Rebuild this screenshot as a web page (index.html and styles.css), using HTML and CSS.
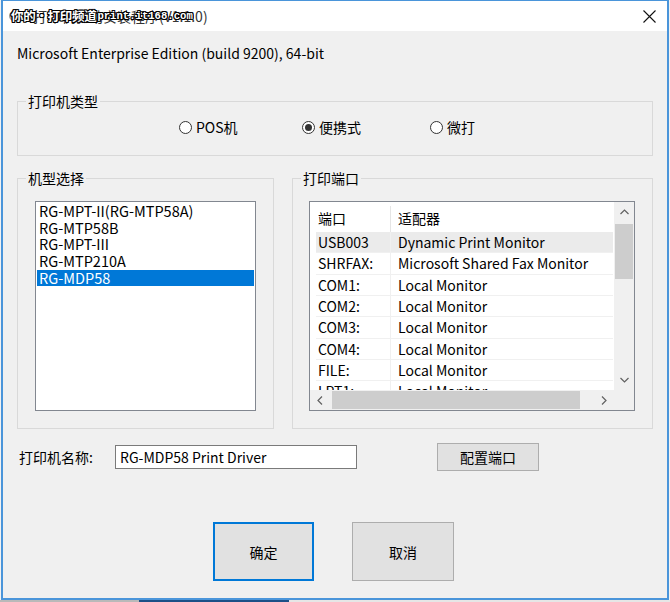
FILE: index.html
```html
<!DOCTYPE html>
<html lang="zh-CN">
<head>
<meta charset="utf-8">
<title>打印机驱动安装程序</title>
<link rel="stylesheet" href="styles.css">
</head>
<body>
<div class="window">
  <div class="titlebar">
    <span class="app-icon"></span>
    <span class="title">打印机驱动安装程序(V1.1.0)</span>
    <span class="watermark"><span class="wm-cn">你的·打印频道</span><span class="wm-en">print.it168.com</span></span>
    <span class="close">
      <svg width="13" height="13" viewBox="0 0 13 13"><path d="M0.5 0.5 L12.5 12.5 M12.5 0.5 L0.5 12.5" stroke="#111" stroke-width="1.1" fill="none"/></svg>
    </span>
  </div>
  <div class="content">
    <div class="info">Microsoft Enterprise Edition (build 9200), 64-bit</div>

    <fieldset class="group type-group">
      <legend>打印机类型</legend>
      <div class="radios">
        <label class="radio"><span class="circle"></span>POS机</label>
        <label class="radio checked"><span class="circle"></span>便携式</label>
        <label class="radio"><span class="circle"></span>微打</label>
      </div>
    </fieldset>

    <div class="groups">
      <fieldset class="group model-group">
        <legend>机型选择</legend>
        <ul class="listbox">
          <li>RG-MPT-II(RG-MTP58A)</li>
          <li>RG-MTP58B</li>
          <li>RG-MPT-III</li>
          <li>RG-MTP210A</li>
          <li class="selected">RG-MDP58</li>
        </ul>
      </fieldset>

      <fieldset class="group port-group">
        <legend>打印端口</legend>
        <div class="listview">
          <div class="lv-body">
            <div class="lv-table">
              <div class="lv-head"><span class="c1">端口</span><span class="c2">适配器</span></div>
              <div class="lv-row hot"><span class="c1">USB003</span><span class="c2">Dynamic Print Monitor</span></div>
              <div class="lv-row"><span class="c1">SHRFAX:</span><span class="c2">Microsoft Shared Fax Monitor</span></div>
              <div class="lv-row"><span class="c1">COM1:</span><span class="c2">Local Monitor</span></div>
              <div class="lv-row"><span class="c1">COM2:</span><span class="c2">Local Monitor</span></div>
              <div class="lv-row"><span class="c1">COM3:</span><span class="c2">Local Monitor</span></div>
              <div class="lv-row"><span class="c1">COM4:</span><span class="c2">Local Monitor</span></div>
              <div class="lv-row"><span class="c1">FILE:</span><span class="c2">Local Monitor</span></div>
              <div class="lv-row"><span class="c1">LPT1:</span><span class="c2">Local Monitor</span></div>
            </div>
          </div>
          <div class="vscroll">
            <span class="arrow"><svg width="9" height="6" viewBox="0 0 9 6"><path d="M0.5 5 L4.5 1 L8.5 5" stroke="#606060" stroke-width="1.2" fill="none"/></svg></span>
            <span class="track"><span class="thumb"></span></span>
            <span class="arrow"><svg width="9" height="6" viewBox="0 0 9 6"><path d="M0.5 1 L4.5 5 L8.5 1" stroke="#606060" stroke-width="1.2" fill="none"/></svg></span>
          </div>
          <div class="hscroll">
            <span class="arrow"><svg width="6" height="9" viewBox="0 0 6 9"><path d="M5 0.5 L1 4.5 L5 8.5" stroke="#606060" stroke-width="1.2" fill="none"/></svg></span>
            <span class="track"><span class="thumb"></span></span>
            <span class="arrow"><svg width="6" height="9" viewBox="0 0 6 9"><path d="M1 0.5 L5 4.5 L1 8.5" stroke="#606060" stroke-width="1.2" fill="none"/></svg></span>
          </div>
          <div class="corner"></div>
        </div>
      </fieldset>
    </div>

    <div class="name-row">
      <span class="name-label">打印机名称:</span>
      <span class="textbox">RG-MDP58 Print Driver</span>
      <button class="btn config-btn">配置端口</button>
    </div>

    <div class="actions">
      <button class="btn big default">确定</button>
      <button class="btn big">取消</button>
    </div>
  </div>
</div>
<div class="taskbar">
  <span class="tb-text"></span>
  <span class="tb-active"></span>
  <span class="tb-rest"></span>
</div>
</body>
</html>
```

FILE: styles.css
```css
* { box-sizing: border-box; }

html, body {
  margin: 0;
  padding: 0;
}

body {
  width: 670px;
  height: 602px;
  overflow: hidden;
  background: #f2f2f2;
  font-family: "Noto Sans CJK SC", "Noto Sans", sans-serif;
  font-size: 14px;
  color: #000;
}

.window {
  margin-left: 1px;
  width: 668px;
  height: 600px;
  border: 2px solid #4a95da;
  border-top-width: 1px;
  background: #f0f0f0;
  display: flex;
  flex-direction: column;
}

/* ---------- title bar ---------- */
.titlebar {
  position: relative;
  height: 30px;
  flex: none;
  background: #fff;
  display: flex;
  align-items: center;
}

.app-icon {
  width: 10px;
  height: 10px;
  margin-left: 6px;
  border-radius: 50%;
  background: #9a9a9a;
}

.title {
  margin-left: 14px;
  font-size: 14px;
  color: #333;
  line-height: 18px;
}

.watermark {
  position: absolute;
  left: 8px;
  top: 6px;
  display: flex;
  align-items: center;
  color: #fff;
  font-weight: bold;
  line-height: 18px;
  text-shadow:
    1px 0 0 #000, -1px 0 0 #000, 0 1px 0 #000, 0 -1px 0 #000,
    1px 1px 0 #000, -1px -1px 0 #000, 1px -1px 0 #000, -1px 1px 0 #000;
}

.wm-cn {
  font-size: 12.5px;
  letter-spacing: -0.3px;
}

.wm-en {
  font-family: "Liberation Mono", monospace;
  font-size: 10.6px;
  margin-left: 1px;
}

.close {
  position: absolute;
  right: 11px;
  top: 9px;
  width: 13px;
  height: 13px;
  display: flex;
}

/* ---------- content ---------- */
.content {
  flex: 1;
  padding: 13px 14px 0 14px;
  display: flex;
  flex-direction: column;
}

.info {
  line-height: 18px;
}

.group {
  margin: 0;
  padding: 0;
  min-width: 0;
  border: 1px solid #d9d9d9;
}

.group legend {
  margin-left: 8px;
  padding: 0 2px;
  line-height: 16px;
}

.type-group {
  margin-top: 31px;
  padding: 10px 0 20px 0;
}

.radios {
  margin-left: 161px;
  display: grid;
  grid-template-columns: 123px 128px auto;
  height: 16px;
}

.radio {
  display: flex;
  align-items: center;
  gap: 4px;
  line-height: 16px;
}

.circle {
  width: 13px;
  height: 13px;
  border-radius: 50%;
  border: 1px solid #333;
  background: #fff;
  display: flex;
  align-items: center;
  justify-content: center;
}

.radio.checked .circle::after {
  content: "";
  width: 7px;
  height: 7px;
  border-radius: 50%;
  background: #333;
}

.groups {
  margin-top: 14px;
  display: flex;
  gap: 18px;
}

.model-group {
  width: 257px;
  flex: none;
  padding: 15px 0 17px 0;
}

.port-group {
  flex: 1;
  padding: 15px 0 17px 0;
}

/* ---------- list box ---------- */
.listbox {
  list-style: none;
  margin: 0 17px;
  height: 210px;
  border: 1px solid #828790;
  background: #fff;
  padding: 1px 1px 0 1px;
}

.listbox li {
  height: 16.67px;
  line-height: 16.67px;
  padding-left: 2px;
  white-space: nowrap;
  font-size: 14.5px;
}

.listbox li.selected {
  background: #0078d7;
  color: #fff;
}

/* ---------- list view ---------- */
.listview {
  margin: 0 17px 0 16px;
  height: 210px;
  border: 1px solid #828790;
  background: #fff;
  display: grid;
  grid-template-columns: 1fr 20px;
  grid-template-rows: 1fr 20px;
}

.lv-body {
  overflow: hidden;
  min-width: 0;
  min-height: 0;
}

.lv-table {
  margin-left: 6px;
  margin-right: 1px;
}

.lv-head, .lv-row {
  display: flex;
  white-space: nowrap;
}

.lv-head {
  height: 30px;
  padding-top: 4px;
  line-height: 24px;
}

.lv-head .c1 {
  border-right: 1px solid #e5e5e5;
}

.lv-row {
  height: 21.33px;
  line-height: 20px;
  border-bottom: 1px solid #f0f0f0;
}

.lv-row .c1 {
  border-right: 1px solid #f0f0f0;
}

.lv-row.hot {
  background: #ebebeb;
}

.c1 {
  width: 75px;
  flex: none;
  padding-left: 2px;
}

.c2 {
  flex: 1;
  padding-left: 7px;
}

.vscroll, .hscroll {
  background: #f0f0f0;
  display: flex;
}

.vscroll {
  flex-direction: column;
}

.arrow {
  flex: none;
  width: 20px;
  height: 20px;
  display: flex;
  align-items: center;
  justify-content: center;
}

.track {
  flex: 1;
  display: flex;
}

.vscroll .track {
  flex-direction: column;
  padding: 2px 1px 0 1px;
}

.vscroll .thumb {
  height: 55px;
  background: #cdcdcd;
}

.hscroll .track {
  padding: 1px 0 1px 2px;
}

.hscroll .thumb {
  width: 248px;
  background: #cdcdcd;
}

.corner {
  background: #f0f0f0;
}

/* ---------- name row ---------- */
.name-row {
  margin-top: 14px;
  height: 28px;
  display: flex;
  align-items: center;
  padding-left: 2px;
}

.name-label {
  width: 96px;
  flex: none;
}

.textbox {
  width: 242px;
  height: 24px;
  border: 1px solid #7a7a7a;
  background: #fff;
  padding-left: 4px;
  line-height: 22px;
  white-space: nowrap;
}

.btn {
  font-family: inherit;
  font-size: 14px;
  color: #000;
  background: #e1e1e1;
  border: 1px solid #adadad;
  padding: 0;
  margin: 0;
}

.config-btn {
  margin-left: 80px;
  width: 102px;
  height: 28px;
}

/* ---------- dialog buttons ---------- */
.actions {
  margin-top: 51px;
  padding-left: 196px;
  display: flex;
  gap: 38px;
}

.btn.big {
  width: 102px;
  height: 59px;
}

.btn.big.default {
  width: 101px;
  border: 2px solid #0078d7;
}

/* ---------- taskbar strip below ---------- */
.taskbar {
  height: 2px;
  display: flex;
  background: #e9e9e9;
}

.tb-text {
  width: 139px;
  background: #b9b9b9;
}

.tb-active {
  width: 150px;
  background: #1c4f87;
}

.tb-rest {
  flex: 1;
  background: #e6e6e6;
}
```
